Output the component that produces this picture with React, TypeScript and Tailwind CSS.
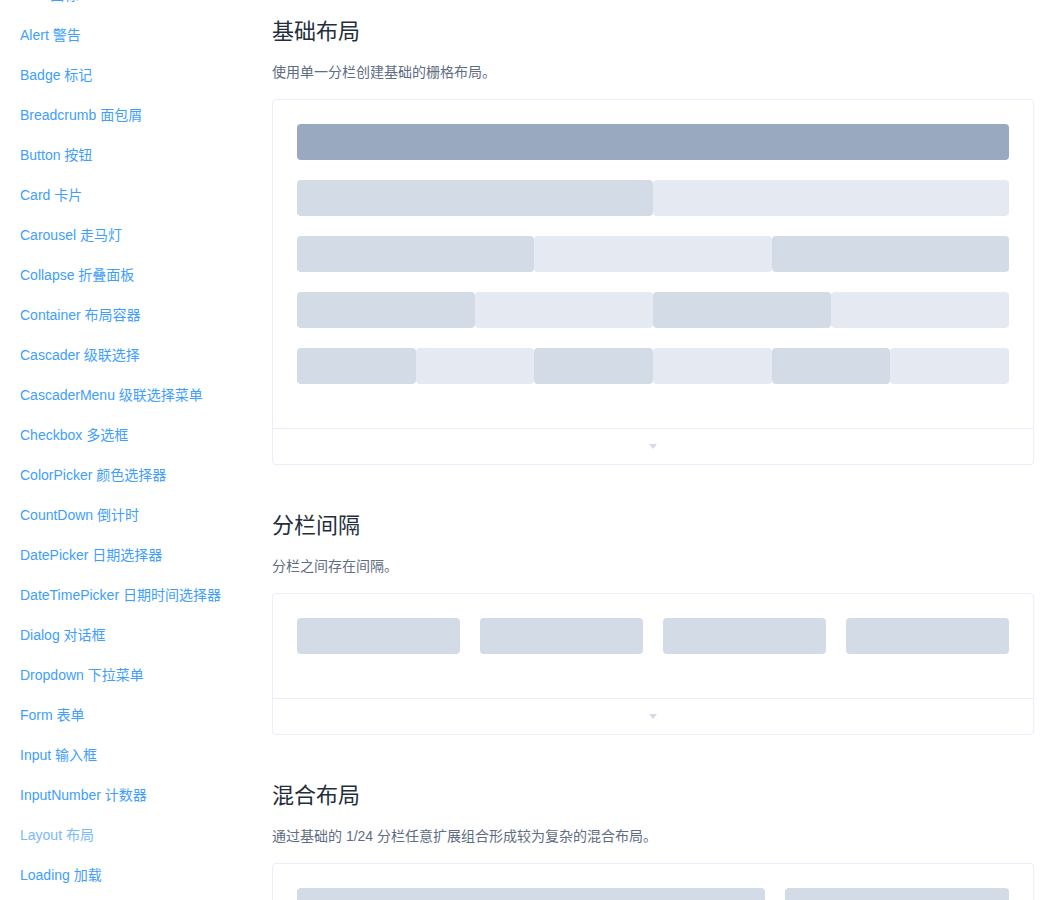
const font = "font-['Liberation_Sans','Noto_Sans_CJK_SC',sans-serif]";

const navItems = [
  "Icon 图标",
  "Alert 警告",
  "Badge 标记",
  "Breadcrumb 面包屑",
  "Button 按钮",
  "Card 卡片",
  "Carousel 走马灯",
  "Collapse 折叠面板",
  "Container 布局容器",
  "Cascader 级联选择",
  "CascaderMenu 级联选择菜单",
  "Checkbox 多选框",
  "ColorPicker 颜色选择器",
  "CountDown 倒计时",
  "DatePicker 日期选择器",
  "DateTimePicker 日期时间选择器",
  "Dialog 对话框",
  "Dropdown 下拉菜单",
  "Form 表单",
  "Input 输入框",
  "InputNumber 计数器",
  "Layout 布局",
  "Loading 加载",
];

const Caret = () => (
  <svg width="8" height="5" viewBox="0 0 8 5" className="block">
    <path d="M0 0 L8 0 L4 5 Z" fill="#d3dce6" />
  </svg>
);

const DemoBlock = ({ children, footer = true }: { children: React.ReactNode; footer?: boolean }) => (
  <div className="rounded-[4px] border border-[#eaeefb] bg-white">
    <div className="p-6">{children}</div>
    {footer && (
      <div className="flex h-9 items-center justify-center border-t border-[#eaeefb]">
        <Caret />
      </div>
    )}
  </div>
);

const Section = ({ title, desc, children, first }: { title: string; desc: string; children: React.ReactNode; first?: boolean }) => (
  <section className={first ? "" : "mt-[44px]"}>
    <h3 className="text-[22px] leading-[33px] font-normal text-[#1f2f3d]">{title}</h3>
    <p className="mt-[14px] text-sm leading-[21px] text-[#5e6d82]">{desc}</p>
    <div className="mt-4">{children}</div>
  </section>
);

const dark = "bg-[#d3dce6]";
const light = "bg-[#e5e9f2]";

// gutter row: columns carry 10px side padding, row pulls back by 10px
const GutterCol = ({ width }: { width: string }) => (
  <div className={`px-[10px] ${width}`}>
    <div className={`h-9 rounded ${dark}`} />
  </div>
);

export default function App() {
  return (
    <div className={`flex h-[900px] overflow-hidden bg-white ${font}`}>
      {/* Sidebar */}
      <aside className="w-[272px] shrink-0">
        <ul className="mt-[-25px]">
          {navItems.map((item) => (
            <li
              key={item}
              className={`h-10 pl-5 text-sm leading-10 ${item === "Layout 布局" ? "text-[#7ab8ff]" : "text-[#409eff]"}`}
            >
              {item}
            </li>
          ))}
        </ul>
      </aside>

      {/* Main */}
      <main className="w-[762px] shrink-0 pt-[15px]">
        <Section first title="基础布局" desc="使用单一分栏创建基础的栅格布局。">
          <DemoBlock>
            <div className="mb-5 flex">
              <div className="h-9 w-full rounded bg-[#99a9bf]" />
            </div>
            <div className="mb-5 flex">
              <div className={`h-9 w-1/2 rounded ${dark}`} />
              <div className={`h-9 w-1/2 rounded ${light}`} />
            </div>
            <div className="mb-5 flex">
              <div className={`h-9 w-1/3 rounded ${dark}`} />
              <div className={`h-9 w-1/3 rounded ${light}`} />
              <div className={`h-9 w-1/3 rounded ${dark}`} />
            </div>
            <div className="mb-5 flex">
              <div className={`h-9 w-1/4 rounded ${dark}`} />
              <div className={`h-9 w-1/4 rounded ${light}`} />
              <div className={`h-9 w-1/4 rounded ${dark}`} />
              <div className={`h-9 w-1/4 rounded ${light}`} />
            </div>
            <div className="mb-5 flex">
              <div className={`h-9 w-1/6 rounded ${dark}`} />
              <div className={`h-9 w-1/6 rounded ${light}`} />
              <div className={`h-9 w-1/6 rounded ${dark}`} />
              <div className={`h-9 w-1/6 rounded ${light}`} />
              <div className={`h-9 w-1/6 rounded ${dark}`} />
              <div className={`h-9 w-1/6 rounded ${light}`} />
            </div>
          </DemoBlock>
        </Section>

        <Section title="分栏间隔" desc="分栏之间存在间隔。">
          <DemoBlock>
            <div className="mx-[-10px] mb-5 flex">
              <GutterCol width="w-1/4" />
              <GutterCol width="w-1/4" />
              <GutterCol width="w-1/4" />
              <GutterCol width="w-1/4" />
            </div>
          </DemoBlock>
        </Section>

        <Section title="混合布局" desc="通过基础的 1/24 分栏任意扩展组合形成较为复杂的混合布局。">
          <DemoBlock>
            <div className="mx-[-10px] mb-5 flex">
              <GutterCol width="w-2/3" />
              <GutterCol width="w-1/3" />
            </div>
            <div className="mx-[-10px] mb-5 flex">
              <GutterCol width="w-1/3" />
              <GutterCol width="w-1/3" />
              <GutterCol width="w-1/6" />
              <GutterCol width="w-1/6" />
            </div>
          </DemoBlock>
        </Section>
      </main>
    </div>
  );
}
